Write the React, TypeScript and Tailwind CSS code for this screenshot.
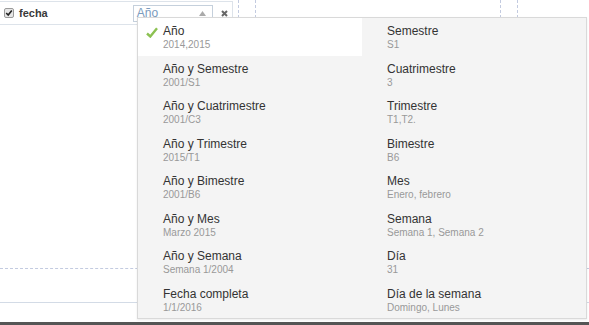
import React from 'react';

const leftItems = [
  { title: 'Año', sub: '2014,2015', selected: true },
  { title: 'Año y Semestre', sub: '2001/S1' },
  { title: 'Año y Cuatrimestre', sub: '2001/C3' },
  { title: 'Año y Trimestre', sub: '2015/T1' },
  { title: 'Año y Bimestre', sub: '2001/B6' },
  { title: 'Año y Mes', sub: 'Marzo 2015' },
  { title: 'Año y Semana', sub: 'Semana 1/2004' },
  { title: 'Fecha completa', sub: '1/1/2016' },
];

const rightItems = [
  { title: 'Semestre', sub: 'S1' },
  { title: 'Cuatrimestre', sub: '3' },
  { title: 'Trimestre', sub: 'T1,T2.' },
  { title: 'Bimestre', sub: 'B6' },
  { title: 'Mes', sub: 'Enero, febrero' },
  { title: 'Semana', sub: 'Semana 1, Semana 2' },
  { title: 'Día', sub: '31' },
  { title: 'Día de la semana', sub: 'Domingo, Lunes' },
];

type Item = { title: string; sub: string; selected?: boolean };

function Option({ item }: { item: Item }) {
  return (
    <div
      className={`relative h-[37.5px] pl-[25px] pt-[6px] ${item.selected ? 'bg-white' : ''}`}
    >
      {item.selected && (
        <svg className="absolute left-[8px] top-[9px]" width="12" height="11" viewBox="0 0 12 11">
          <path d="M1 6.5 L4.3 9.5 L11 1.2" fill="none" stroke="#8cc152" strokeWidth="2.4" />
        </svg>
      )}
      <div className="text-[12px] leading-[14px] text-[#333]">{item.title}</div>
      <div className="mt-[1px] text-[10px] leading-[12px] text-[#999]">{item.sub}</div>
    </div>
  );
}

export default function App() {
  return (
    <div className="relative w-[589px] h-[325px] overflow-hidden bg-white font-['Liberation_Sans',Arial,sans-serif]">
      <div className="flex flex-col h-full">
        {/* top area with field row and guide columns */}
        <div className="flex h-[268px]">
          <div className="w-[233px]">
            <div className="mt-[1px] h-[24px] flex items-center border-y border-r border-[#dde3ea]">
              <svg className="ml-[4px]" width="10" height="10" viewBox="0 0 10 10">
                <rect x="0.5" y="0.5" width="9" height="9" rx="1.5" fill="#e6e6e6" stroke="#9a9a9a" />
                <path d="M2.2 5 L4.2 7 L7.8 2.4" fill="none" stroke="#222" strokeWidth="1.6" />
              </svg>
              <span className="ml-[5px] text-[11px] font-bold text-[#3a3a3a]">fecha</span>
              <div className="ml-[85px] w-[80px] h-[17px] border border-[#c5d0dc] flex items-center justify-between pl-[3px] pr-[6px]">
                <span className="text-[12px] leading-[14px] text-[#7a9bbd]">Año</span>
                <svg width="7" height="5" viewBox="0 0 7 5">
                  <path d="M0 5 L3.5 0 L7 5 Z" fill="#aaa" />
                </svg>
              </div>
              <svg className="ml-[8px]" width="7" height="7" viewBox="0 0 7 7">
                <path d="M1 1 L6 6 M6 1 L1 6" stroke="#666" strokeWidth="2" />
              </svg>
            </div>
          </div>
          <div className="ml-[5px] w-[18px] border-x border-dashed border-[#c3cbe0]" />
          <div className="ml-[244px] w-[18px] border-x border-dashed border-[#c3cbe0]" />
        </div>
        <div className="h-[34px] border-t border-dashed border-[#c3cbe0]" />
        <div className="h-[20px] border-t border-[#d3dbe6]" />
        <div className="h-[3px] bg-[#555]" />
      </div>

      {/* dropdown menu */}
      <div className="absolute left-[137px] top-[17px] w-[450px] h-[302px] bg-[#f4f4f4] border border-[#d9d9d9] shadow-[0_1px_2px_rgba(0,0,0,0.08)] grid grid-cols-2">
        <div>
          {leftItems.map((it, i) => (
            <Option key={i} item={it} />
          ))}
        </div>
        <div>
          {rightItems.map((it, i) => (
            <Option key={i} item={it} />
          ))}
        </div>
      </div>
    </div>
  );
}
